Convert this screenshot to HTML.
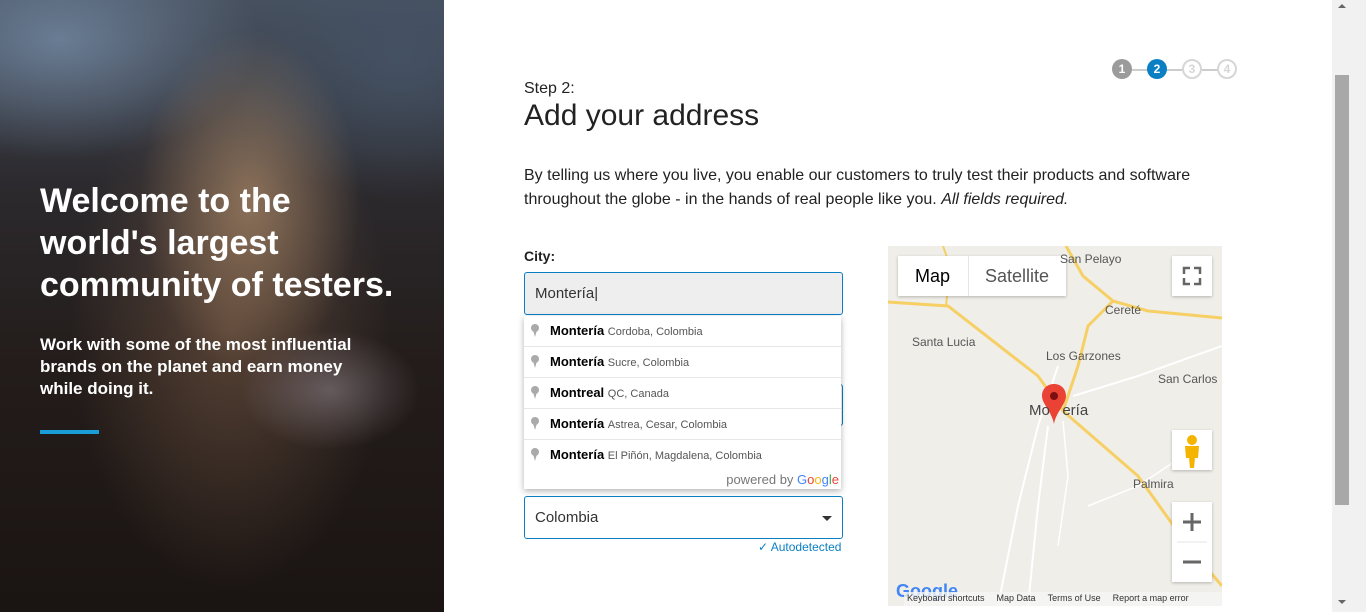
<!DOCTYPE html>
<html><head><meta charset="utf-8"><style>
*{margin:0;padding:0;box-sizing:border-box}
body{width:1366px;height:612px;overflow:hidden;font-family:"Liberation Sans",Arial,sans-serif;background:#fff;position:relative}
.left{position:absolute;left:0;top:0;width:444px;height:612px;overflow:hidden;
background:
radial-gradient(ellipse 90px 60px at 330px 390px,rgba(150,140,150,.5),transparent),
radial-gradient(ellipse 110px 170px at 250px 200px,rgba(200,160,120,.55),transparent),
radial-gradient(ellipse 160px 260px at 230px 330px,rgba(120,90,70,.6),transparent),
radial-gradient(ellipse 200px 120px at 60px 40px,rgba(110,130,155,.9),transparent),
radial-gradient(ellipse 180px 140px at 400px 60px,rgba(70,85,105,.8),transparent),
linear-gradient(180deg,#46505e 0%,#2c2a2e 30%,#231c1a 60%,#1a1412 100%)}
.left h1{position:absolute;left:40px;top:180px;color:#fff;font-size:34px;line-height:42px;font-weight:bold;width:372px}
.left p{position:absolute;left:40px;top:334px;color:#fff;font-size:17px;line-height:22px;font-weight:bold;width:338px}
.left .bar{position:absolute;left:40px;top:430px;width:59px;height:4px;background:#1a9ed9}
.step{position:absolute;left:524px;top:80px;font-size:16px;color:#222}
.title{position:absolute;left:524px;top:99px;font-size:30px;color:#222}
.desc{position:absolute;left:524px;top:164px;width:690px;font-size:16px;line-height:24px;color:#222}
.lbl{position:absolute;left:524px;top:248px;font-size:14px;font-weight:bold;color:#222}
.inp{position:absolute;left:524px;width:319px;height:43px;border:1px solid #0a7fc4;border-radius:3px;font-size:15px;color:#333;padding:12px 10px}
.dd{position:absolute;left:524px;top:316px;width:317px;height:173px;background:#fff;box-shadow:0 2px 6px rgba(0,0,0,.3);font-size:13px}
.dd .it{height:31px;border-bottom:1px solid #e6e6e6;padding:7px 0 0 26px;position:relative;white-space:nowrap}
.dd .it b{font-size:13px;color:#000}
.dd .it span{font-size:11px;color:#555}
.dd .it i{position:absolute;left:7px;top:8px;width:8px;height:8px;border-radius:50%;background:#aaa}
.dd .it i:after{content:"";position:absolute;left:2px;top:6px;border-left:2px solid transparent;border-right:2px solid transparent;border-top:7px solid #aaa}
.pw{position:absolute;right:2px;bottom:2px;font-size:13px;color:#777}
.steps{position:absolute;top:59px;left:1112px}
.c{position:absolute;width:20px;height:20px;border-radius:50%;font-size:12px;font-weight:bold;text-align:center;line-height:20px;color:#fff}
.ln{position:absolute;top:10px;height:2px;background:#ccc;width:16px}
.map{position:absolute;left:888px;top:246px;width:334px;height:360px;background:#f0eee9;overflow:hidden}
.btn{position:absolute;background:#fff;box-shadow:0 1px 3px rgba(0,0,0,.25)}
.mt{position:absolute;font-size:11px;color:#555}
.sb{position:absolute;left:1332px;top:0;width:34px;height:612px;background:#f1f1f1}
.sb .th{position:absolute;left:3px;top:75px;width:14px;height:430px;background:#a8a8a8}
</style></head><body>
<div class="left">
<h1>Welcome to the world's largest community of testers.</h1>
<p>Work with some of the most influential brands on the planet and earn money while doing it.</p>
<div class="bar"></div>
</div>

<div class="steps">
<div class="c" style="left:0;top:0;background:#9b9b9b">1</div>
<div class="ln" style="left:20px"></div>
<div class="c" style="left:35px;top:0;background:#0a7fc4">2</div>
<div class="ln" style="left:55px"></div>
<div class="c" style="left:70px;top:0;border:2px solid #d6d6d6;color:#d6d6d6;line-height:16px">3</div>
<div class="ln" style="left:90px"></div>
<div class="c" style="left:105px;top:0;border:2px solid #d6d6d6;color:#d6d6d6;line-height:16px">4</div>
</div>

<div class="step">Step 2:</div>
<div class="title">Add your address</div>
<div class="desc">By telling us where you live, you enable our customers to truly test their products and software throughout the globe - in the hands of real people like you. <i>All fields required.</i></div>
<div class="lbl">City:</div>
<div class="inp" style="top:272px;background:#eee">Montería|</div>
<div class="inp" style="top:384px;height:42px"></div>
<div class="inp" style="top:496px;height:43px">Colombia<span style="position:absolute;right:10px;top:19px;border-left:5px solid transparent;border-right:5px solid transparent;border-top:5px solid #333"></span></div>
<div style="position:absolute;left:758px;top:540px;font-size:12px;color:#0a7fc4">✓ Autodetected</div>

<div class="dd">
<div class="it"><i></i><b>Montería</b> <span>Cordoba, Colombia</span></div>
<div class="it"><i></i><b>Montería</b> <span>Sucre, Colombia</span></div>
<div class="it"><i></i><b>Montreal</b> <span>QC, Canada</span></div>
<div class="it"><i></i><b>Montería</b> <span>Astrea, Cesar, Colombia</span></div>
<div class="it" style="border:none"><i></i><b>Montería</b> <span>El Piñón, Magdalena, Colombia</span></div>
<div class="pw">powered by <span style="color:#4285f4">G</span><span style="color:#ea4335">o</span><span style="color:#fbbc05">o</span><span style="color:#4285f4">g</span><span style="color:#34a853">l</span><span style="color:#ea4335">e</span></div>
</div>

<div class="map">
<svg width="334" height="360" style="position:absolute;left:0;top:0" fill="none">
<path d="M0 56 L60 60 L150 130 L175 165 L250 230 L300 300 L334 340" stroke="#f6cf65" stroke-width="3"/>
<path d="M178 0 L195 30 L225 55 L200 80 L190 120 L175 165" stroke="#f6cf65" stroke-width="3"/>
<path d="M225 55 L260 65 L334 72" stroke="#f6cf65" stroke-width="3"/>
<path d="M55 0 L62 20 L58 60" stroke="#f6cf65" stroke-width="2"/>
<path d="M160 180 L150 260 L140 360 M185 150 L250 130 L334 100 M170 120 L150 180 L130 260 L110 360" stroke="#fff" stroke-width="2"/>
<path d="M175 175 L180 230 L170 300 M200 260 L250 240 L310 200" stroke="#fff" stroke-width="1.5"/>
</svg>
<div class="btn" style="left:10px;top:10px;width:168px;height:40px">
<span style="position:absolute;left:17px;top:10px;font-size:18px;color:#000">Map</span>
<span style="position:absolute;left:70px;top:0;width:1px;height:40px;background:#e6e6e6"></span>
<span style="position:absolute;left:87px;top:10px;font-size:18px;color:#555">Satellite</span></div>
<div class="btn" style="left:284px;top:10px;width:40px;height:40px"><svg width="40" height="40"><path d="M12 18V12H18M22 12H28V18M28 22V28H22M18 28H12V22" stroke="#666" stroke-width="2.5" fill="none"/></svg></div>
<div class="btn" style="left:284px;top:184px;width:40px;height:40px"><svg width="40" height="40"><circle cx="20" cy="10" r="5" fill="#f5b400"/><path d="M13 16H27L26 28H23L22 38H18L17 28H14Z" fill="#f5b400"/></svg></div>
<div class="btn" style="left:284px;top:256px;width:40px;height:80px"><svg width="40" height="80"><path d="M11 20H29M20 11V29M11 60H29" stroke="#666" stroke-width="3"/><path d="M5 40H35" stroke="#e6e6e6"/></svg></div>
<svg width="30" height="40" style="position:absolute;left:154px;top:138px"><path d="M12 0C5 0 0 5 0 12C0 20 10 28 12 40C14 28 24 20 24 12C24 5 19 0 12 0Z" fill="#ea4335"/><circle cx="12" cy="12" r="4" fill="#7a1010"/></svg>
<div class="mt" style="left:141px;top:156px;font-size:15px;color:#444">Mo&nbsp;&nbsp;&nbsp;ería</div>
<div class="mt" style="left:172px;top:6px;font-size:12px">San Pelayo</div>
<div class="mt" style="left:217px;top:57px;font-size:12px">Cereté</div>
<div class="mt" style="left:24px;top:89px;font-size:12px">Santa Lucia</div>
<div class="mt" style="left:158px;top:103px;font-size:12px">Los Garzones</div>
<div class="mt" style="left:270px;top:126px;font-size:12px">San Carlos</div>
<div class="mt" style="left:245px;top:231px;font-size:12px">Palmira</div>
<div style="position:absolute;left:8px;top:335px;font-size:18px;font-weight:bold;color:#4285f4">Google</div>
<div style="position:absolute;left:16px;top:346px;width:318px;height:14px;background:rgba(245,245,245,.8);font-size:9px;color:#333;white-space:nowrap;padding-top:1px">
<span style="margin-left:3px">Keyboard shortcuts</span><span style="margin-left:12px">Map Data</span><span style="margin-left:12px">Terms of Use</span><span style="margin-left:12px">Report a map error</span></div>
</div>

<div class="sb"><div class="th"></div>
<div style="position:absolute;left:6px;top:4px;border-left:4px solid transparent;border-right:4px solid transparent;border-bottom:4px solid #666"></div>
<div style="position:absolute;left:6px;top:600px;border-left:4px solid transparent;border-right:4px solid transparent;border-top:4px solid #666"></div>
</div>
</body></html>
